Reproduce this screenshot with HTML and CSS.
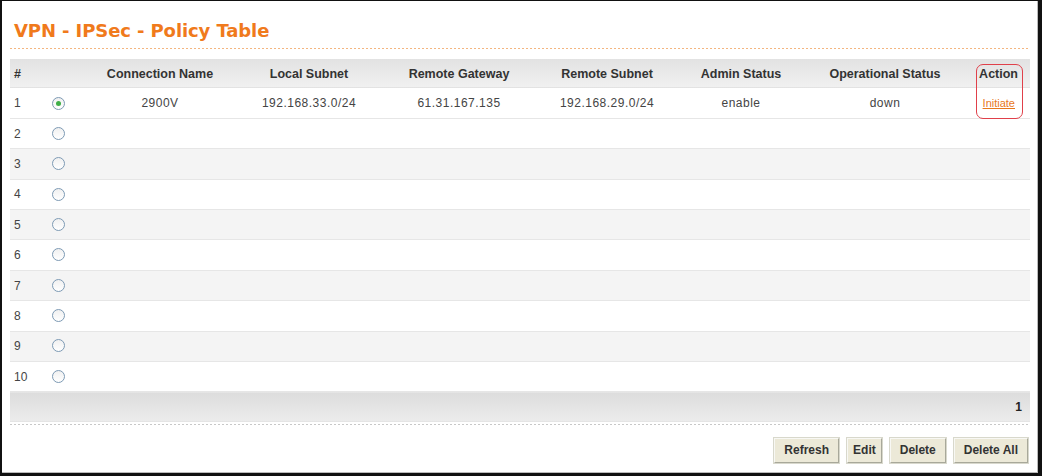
FILE: index.html
```html
<!DOCTYPE html>
<html lang="en">
<head>
    <meta charset="UTF-8">
    <title>VPN - IPSec - Policy Table</title>
    <link rel="stylesheet" href="styles.css">
</head>
<body>
    <div class="frame">
        <h1 class="page-title">VPN - IPSec - Policy Table</h1>

        <table class="policy-table">
            <thead>
                <tr>
                    <th class="col-num">#</th>
                    <th class="col-sel"></th>
                    <th class="col-name">Connection Name</th>
                    <th class="col-local">Local Subnet</th>
                    <th class="col-gw">Remote Gateway</th>
                    <th class="col-remote">Remote Subnet</th>
                    <th class="col-admin">Admin Status</th>
                    <th class="col-oper">Operational Status</th>
                    <th class="col-action">Action</th>
                </tr>
            </thead>
            <tbody>
                <tr>
                    <td class="col-num">1</td>
                    <td class="col-sel"><span class="radio checked"></span></td>
                    <td>2900V</td>
                    <td>192.168.33.0/24</td>
                    <td>61.31.167.135</td>
                    <td>192.168.29.0/24</td>
                    <td>enable</td>
                    <td>down</td>
                    <td><a href="#" class="initiate">Initiate</a></td>
                </tr>
                <tr><td class="col-num">2</td><td class="col-sel"><span class="radio"></span></td><td></td><td></td><td></td><td></td><td></td><td></td><td></td></tr>
                <tr class="alt"><td class="col-num">3</td><td class="col-sel"><span class="radio"></span></td><td></td><td></td><td></td><td></td><td></td><td></td><td></td></tr>
                <tr><td class="col-num">4</td><td class="col-sel"><span class="radio"></span></td><td></td><td></td><td></td><td></td><td></td><td></td><td></td></tr>
                <tr class="alt"><td class="col-num">5</td><td class="col-sel"><span class="radio"></span></td><td></td><td></td><td></td><td></td><td></td><td></td><td></td></tr>
                <tr><td class="col-num">6</td><td class="col-sel"><span class="radio"></span></td><td></td><td></td><td></td><td></td><td></td><td></td><td></td></tr>
                <tr class="alt"><td class="col-num">7</td><td class="col-sel"><span class="radio"></span></td><td></td><td></td><td></td><td></td><td></td><td></td><td></td></tr>
                <tr><td class="col-num">8</td><td class="col-sel"><span class="radio"></span></td><td></td><td></td><td></td><td></td><td></td><td></td><td></td></tr>
                <tr class="alt"><td class="col-num">9</td><td class="col-sel"><span class="radio"></span></td><td></td><td></td><td></td><td></td><td></td><td></td><td></td></tr>
                <tr><td class="col-num">10</td><td class="col-sel"><span class="radio"></span></td><td></td><td></td><td></td><td></td><td></td><td></td><td></td></tr>
            </tbody>
            <tfoot>
                <tr>
                    <td colspan="9" class="page-count">1</td>
                </tr>
            </tfoot>
        </table>

        <div class="button-bar">
            <button type="button" class="btn">Refresh</button>
            <button type="button" class="btn">Edit</button>
            <button type="button" class="btn">Delete</button>
            <button type="button" class="btn">Delete All</button>
        </div>

        <div class="action-mark"></div>
    </div>
</body>
</html>
```

FILE: styles.css
```css
* {
    margin: 0;
    padding: 0;
    box-sizing: border-box;
}

body {
    background: #111;
    font-family: 'Liberation Sans', Arial, sans-serif;
    font-size: 12px;
    color: #333;
    height: 476px;
    overflow: hidden;
}

.frame {
    position: relative;
    background: white;
    margin: 1px 4px 0 2px;
    height: 472px;
    border-right: 1px solid #bbb;
    border-bottom: 1px solid #bbb;
    padding: 17px 7px 0 8px;
}

.page-title {
    color: #f07a1c;
    font-family: 'DejaVu Sans', Verdana, sans-serif;
    font-size: 18px;
    font-weight: bold;
    letter-spacing: -0.1px;
    line-height: 26px;
    padding: 0 0 5px 4px;
    margin-bottom: 10px;
    background: repeating-linear-gradient(to right, #f4b680 0 2px, transparent 2px 4px) left bottom / 100% 1px no-repeat;
}

.policy-table {
    width: 100%;
    table-layout: fixed;
    border-collapse: collapse;
    text-align: center;
}

.policy-table th {
    height: 29px;
    font-size: 12.5px;
    font-weight: bold;
    color: #333;
    background: linear-gradient(#e2e2e2, #f0f0f0);
    padding-top: 1px;
}

.policy-table thead tr {
    background: repeating-linear-gradient(to right, #c8c8c8 0 2px, transparent 2px 4px) left bottom / 100% 1px no-repeat;
}

.policy-table thead th {
    border-bottom: 2px solid transparent;
}

.policy-table td {
    height: 30.4px;
    border-bottom: 1px solid #e6e6e6;
    color: #444;
    letter-spacing: 0.5px;
}

.policy-table tbody tr.alt td {
    background: #f4f4f4;
}

.policy-table .col-num {
    text-align: left;
    padding-left: 4px;
    letter-spacing: 0;
}

.col-num { width: 36px; }
.col-sel { width: 24px; }
.col-name { width: 180px; }
.col-local { width: 118px; }
.col-gw { width: 182px; }
.col-remote { width: 114px; }
.col-admin { width: 154px; }
.col-oper { width: 134px; }
.col-action { width: 78px; }

.policy-table th.col-action {
    text-align: right;
    padding-right: 12px;
}

.policy-table td:last-child {
    text-align: right;
    padding-right: 15px;
    letter-spacing: 0;
}

.radio {
    display: inline-block;
    width: 13px;
    height: 13px;
    border: 1px solid #7d9ab4;
    border-radius: 50%;
    background: linear-gradient(#f0f0f0, #ffffff);
    vertical-align: middle;
    position: relative;
    top: -1px;
}

.radio.checked::after {
    content: "";
    display: block;
    width: 5px;
    height: 5px;
    margin: 3px;
    border-radius: 50%;
    background: #3fae48;
}

.initiate {
    color: #e8781c;
    font-size: 11px;
    text-decoration: underline;
}

.policy-table tfoot td.page-count {
    height: 30px;
    border-bottom: none;
    background: linear-gradient(#dcdcdc, #ececec);
    font-weight: bold;
    color: #222;
    text-align: right;
    padding-right: 8px;
    letter-spacing: 0;
}

.policy-table tfoot tr {
    border-bottom: 2px solid transparent;
}

.button-bar {
    display: flex;
    justify-content: flex-end;
    gap: 8px;
    padding: 14px 2px 0 0;
    background: repeating-linear-gradient(to right, #c8c8c8 0 2px, transparent 2px 4px) left top / 100% 1px no-repeat;
    margin-top: 1px;
}

.btn {
    height: 25px;
    padding: 0 9px;
    font-family: 'Liberation Sans', Arial, sans-serif;
    font-size: 12px;
    font-weight: bold;
    color: #333;
    background: #ece9d8;
    border: 1px solid;
    border-color: #f8f8f4 #a8a89a #a8a89a #f8f8f4;
    box-shadow: 0 0 0 1px #d8d8cc;
}

.btn:nth-child(2) { padding: 0 5px; }

.action-mark {
    position: absolute;
    left: 974px;
    top: 63px;
    width: 47px;
    height: 55px;
    border: 1.5px solid #e0404a;
    border-radius: 7px;
}
```
